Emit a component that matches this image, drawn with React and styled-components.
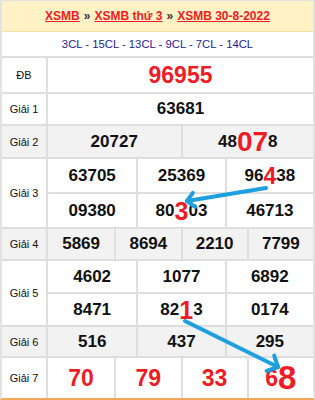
import React from "react";
import styled, { createGlobalStyle } from "styled-components";

const Global = createGlobalStyle`
  html, body { margin: 0; padding: 0; background: #fff; }
  body { font-family: "Liberation Sans", Arial, sans-serif; }
`;

const LINE = "#dedede";
const RED = "#ee1c25";

const Frame = styled.div`
  position: relative;
  width: 315px;
  box-sizing: border-box;
  border-top: 1px solid #e2e2e2;
  border-left: 2px solid #e2e2e2;
  border-right: 2px solid #e2e2e2;
  border-bottom: 2px solid #f2a65a;
  font-family: "Liberation Sans", Arial, sans-serif;
`;

const Header = styled.div`
  height: 31px;
  box-sizing: border-box;
  background: #fff2c4;
  border-bottom: 1px solid #f6e2a2;
  display: flex;
  align-items: center;
  justify-content: center;
  font-size: 12px;
  font-weight: bold;
  color: #333;
  white-space: nowrap;
`;

const Crumb = styled.a`
  color: ${RED};
  text-decoration: underline;
  text-decoration-thickness: 1px;
  text-underline-offset: 1px;
`;

const Sep = styled.span`
  margin: 0 4px;
  color: #333;
`;

const Sub = styled.div`
  height: 26px;
  box-sizing: border-box;
  border-bottom: 2px solid ${LINE};
  display: flex;
  align-items: center;
  justify-content: center;
  font-size: 11.3px;
  color: #1d1d8f;
  white-space: nowrap;
`;

const Row = styled.div`
  display: flex;
  height: ${(p) => p.$h}px;
  box-sizing: border-box;
  background: ${(p) => (p.$alt ? "#f2f2f2" : "#ffffff")};
  border-bottom: ${(p) => (p.$last ? "none" : `2px solid ${LINE}`)};
`;

const Label = styled.div`
  width: 44px;
  flex: none;
  display: flex;
  align-items: center;
  justify-content: center;
  border-right: 2px solid ${LINE};
  font-size: 11px;
  color: #111;
`;

const Data = styled.div`
  flex: 1;
  min-width: 0;
  display: flex;
  flex-direction: column;
`;

const Line = styled.div`
  flex: 1;
  display: grid;
  grid-template-columns: repeat(${(p) => p.$cols}, 1fr);
  & + & {
    border-top: 2px solid ${LINE};
  }
`;

const Cell = styled.div`
  display: flex;
  align-items: center;
  justify-content: center;
  font-weight: bold;
  font-size: ${(p) => p.$size || 17}px;
  color: ${(p) => p.$color || "#111"};
  white-space: nowrap;
  & + & {
    border-left: 2px solid ${LINE};
  }
`;

const Hot = styled.span`
  color: ${RED};
  font-size: ${(p) => p.$size}px;
  line-height: 0;
`;

const Overlay = styled.svg`
  position: absolute;
  left: -2px;
  top: -1px;
  pointer-events: none;
`;

function Num({ v }) {
  if (typeof v === "string") return v;
  return (
    <>
      {v.pre}
      <Hot $size={v.size}>{v.hot}</Hot>
      {v.post}
    </>
  );
}

const rows = [
  { label: "ĐB", h: 36, lines: [[{ v: "96955", size: 23, color: RED }]] },
  { label: "Giải 1", h: 32, lines: [["63681"]] },
  {
    label: "Giải 2",
    h: 33,
    alt: true,
    lines: [["20727", { pre: "48", hot: "07", post: "8", size: 28 }]],
  },
  {
    label: "Giải 3",
    h: 70,
    lines: [
      ["63705", "25369", { pre: "96", hot: "4", post: "38", size: 23 }],
      ["09380", { pre: "80", hot: "3", post: "03", size: 25 }, "46713"],
    ],
  },
  { label: "Giải 4", h: 32, alt: true, lines: [["5869", "8694", "2210", "7799"]] },
  {
    label: "Giải 5",
    h: 66,
    lines: [
      ["4602", "1077", "6892"],
      ["8471", { pre: "82", hot: "1", post: "3", size: 25 }, "0174"],
    ],
  },
  { label: "Giải 6", h: 31, alt: true, lines: [["516", "437", "295"]] },
  {
    label: "Giải 7",
    h: 40,
    last: true,
    lines: [
      [
        { v: "70", size: 23, color: RED },
        { v: "79", size: 23, color: RED },
        { v: "33", size: 23, color: RED },
        { v: { pre: "6", hot: "8", post: "", size: 33 }, size: 23, color: RED },
      ],
    ],
  },
];

function Arrow({ x1, y1, x2, y2, wing = 11 }) {
  const a = Math.atan2(y1 - y2, x1 - x2);
  const w1 = a + Math.PI / 4;
  const w2 = a - Math.PI / 4;
  return (
    <g stroke="#1e9fe0" strokeWidth="4" strokeLinecap="round" fill="none">
      <line x1={x1} y1={y1} x2={x2} y2={y2} />
      <line x1={x2} y1={y2} x2={x2 + wing * Math.cos(w1)} y2={y2 + wing * Math.sin(w1)} />
      <line x1={x2} y1={y2} x2={x2 + wing * Math.cos(w2)} y2={y2 + wing * Math.sin(w2)} />
    </g>
  );
}

export default function App() {
  return (
    <>
      <Global />
      <Frame>
        <Header>
          <Crumb>XSMB</Crumb>
          <Sep>»</Sep>
          <Crumb>XSMB thứ 3</Crumb>
          <Sep>»</Sep>
          <Crumb>XSMB 30-8-2022</Crumb>
        </Header>
        <Sub>3CL - 15CL - 13CL - 9CL - 7CL - 14CL</Sub>
        {rows.map((r) => (
          <Row key={r.label} $h={r.h} $alt={r.alt} $last={r.last}>
            <Label>{r.label}</Label>
            <Data>
              {r.lines.map((ln, i) => (
                <Line key={i} $cols={ln.length}>
                  {ln.map((c, j) => {
                    const isObj = typeof c === "object" && c.v !== undefined;
                    return (
                      <Cell
                        key={j}
                        $size={isObj ? c.size : undefined}
                        $color={isObj ? c.color : undefined}
                      >
                        <Num v={isObj ? c.v : c} />
                      </Cell>
                    );
                  })}
                </Line>
              ))}
            </Data>
          </Row>
        ))}
        <Overlay width="315" height="400" viewBox="0 0 315 400">
          <Arrow x1={266} y1={188} x2={187} y2={201} wing={10} />
          <Arrow x1={185} y1={321} x2={278} y2={367} wing={12} />
        </Overlay>
      </Frame>
    </>
  );
}
